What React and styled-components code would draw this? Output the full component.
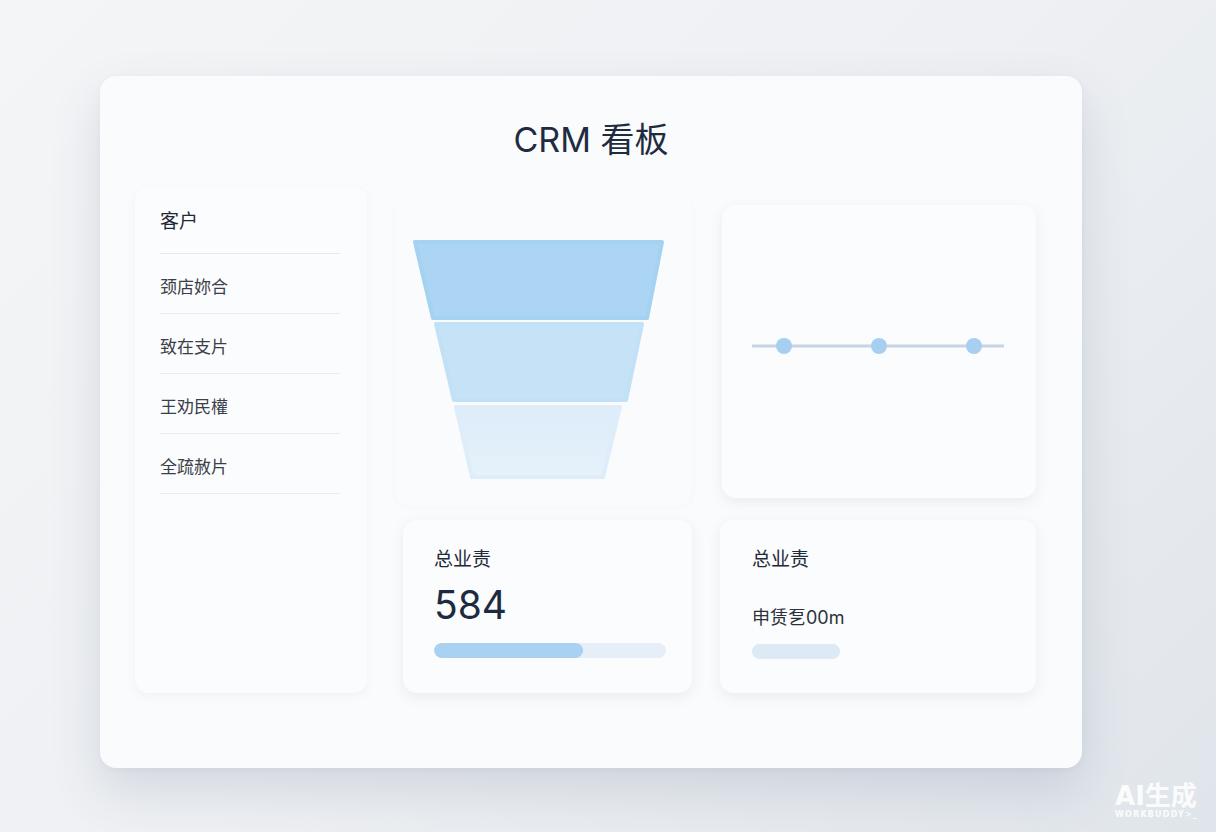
import React from 'react'
import styled, { createGlobalStyle } from 'styled-components'

// customer list + funnel stages
const CUSTOMERS = ['颈店妳合', '致在支片', '王劝民權', '全疏赦片']

const STAGES = [
    { pts: '2,2 249,2 234,78 20,78', fill: '#abd5f3', edge: '#a6d2f2' },
    { pts: '23,84 229,84 213,160 41,160', fill: '#c6e2f6', edge: '#c2e0f6' },
    { pts: '43,167 207,167 190,237 59,237', fill: '#e0eef9', edge: '#deedf9' },
]

const GlobalStyle = createGlobalStyle`
    body {
        margin: 0;
        font-family: Inter, "Noto Sans CJK SC", "Noto Sans", sans-serif;
    }
`

const Page = styled.div`
    position: relative;
    width: 1216px;
    height: 832px;
    box-sizing: border-box;
    padding: 76px 0 0 100px;
    background: linear-gradient(135deg, #f4f5f7 0%, #eef0f3 50%, #e0e5eb 100%);
    overflow: hidden;
`

const Board = styled.div`
    width: 982px;
    height: 692px;
    box-sizing: border-box;
    padding: 44px 0 0 35px;
    border-radius: 16px;
    background: #fafbfc;
    box-shadow: 0 22px 50px rgba(70, 90, 120, 0.16), 0 2px 6px rgba(70, 90, 120, 0.05);
`

const Title = styled.h1`
    margin: 0 35px 0 0;
    font-size: 34px;
    line-height: 40px;
    font-weight: 400;
    text-align: center;
    color: #1f2c40;
`

const Grid = styled.div`
    margin-top: 27px;
    display: grid;
    grid-template-columns: 232px 297px 316px;
    grid-template-rows: 318px 173px;
    column-gap: 28px;
    row-gap: 15px;
`

const Card = styled.div`
    box-sizing: border-box;
    border-radius: 14px;
    background: #fbfcfd;
    box-shadow: 0 4px 14px rgba(60, 85, 120, 0.09);
`

const ListCard = styled(Card)`
    grid-row: 1 / 3;
    padding: 0 27px 0 25px;
    box-shadow: 0 3px 10px rgba(60, 85, 120, 0.05);
`

const ListHead = styled.div`
    padding: 22px 0 18px;
    font-size: 19px;
    line-height: 26px;
    color: #1f2a38;
    border-bottom: 1px solid #e5e9ef;
`

const ListRow = styled.div`
    box-sizing: border-box;
    height: 60px;
    padding-top: 3px;
    display: flex;
    align-items: center;
    font-size: 17px;
    color: #3a4049;
    border-bottom: 1px solid #e8ebf0;
`

const FunnelCard = styled(Card)`
    margin-top: 8px;
    padding: 45px 0 0 18px;
    background: #fafbfc;
    box-shadow: 0 2px 8px rgba(60, 85, 120, 0.025);
`

const LineCard = styled(Card)`
    margin: 18px 0 7px 2px;
    display: flex;
    align-items: center;
    justify-content: center;
    padding: 0 2px 12px 0;
`

const StatCard = styled(Card)`
    margin-left: ${(p) => p.shift || 0}px;
    padding: 28px 28px 0 ${(p) => p.inset}px;
`

const StatLabel = styled.div`
    font-size: 19px;
    line-height: 24px;
    color: #1f2a38;
`

const StatValue = styled.div`
    margin-top: 11px;
    font-size: 39px;
    line-height: 44px;
    font-weight: 400;
    color: #1d2b42;
`

const StatNote = styled.div`
    margin-top: 34px;
    font-size: 18px;
    line-height: 24px;
    color: #2b323c;
`

const Track = styled.div`
    margin-top: ${(p) => p.gap}px;
    width: ${(p) => p.w}px;
    height: 15px;
    border-radius: 8px;
    background: ${(p) => p.bg};
    overflow: hidden;
`

const Fill = styled.div`
    height: 100%;
    border-radius: 8px;
    background: #a9d1f1;
`

const Watermark = styled.div`
    position: absolute;
    right: 18px;
    bottom: 12px;
    display: flex;
    flex-direction: column;
    align-items: flex-start;
    color: rgba(255, 255, 255, 0.9);
    font-family: "DejaVu Sans", "Noto Sans CJK SC", sans-serif;
    font-weight: 700;
`

const MarkBig = styled.span`
    font-size: 26px;
    line-height: 28px;
`

const MarkSmall = styled.span`
    font-size: 8px;
    line-height: 10px;
    letter-spacing: 1.2px;
`

const Funnel = () => (
    <svg width="252" height="240" viewBox="0 0 252 240">
        <defs>
            <linearGradient id="fadeLow" x1="0" y1="0" x2="0" y2="1">
                <stop offset="0" stopColor="#dcecf9" />
                <stop offset="1" stopColor="#e6f1fa" />
            </linearGradient>
        </defs>
        {STAGES.map((s, i) => (
            <polygon key={i} points={s.pts}
                fill={i === 2 ? 'url(#fadeLow)' : s.fill}
                stroke={s.edge} strokeWidth="4" strokeLinejoin="round" />
        ))}
    </svg>
)

const Timeline = () => (
    <svg width="252" height="20" viewBox="0 0 252 20">
        <line x1="1" y1="10" x2="251" y2="10" stroke="#c8d4e2" strokeWidth="3" strokeLinecap="round" />
        {[32, 127, 222].map((x) => (
            <circle key={x} cx={x} cy="10" r="8" fill="#a6cff0" />
        ))}
    </svg>
)

export default function App() {
    return (
        <Page>
            <GlobalStyle />
            <Board>
                <Title>CRM 看板</Title>
                <Grid>
                    <ListCard>
                        <ListHead>客户</ListHead>
                        {CUSTOMERS.map((name) => <ListRow key={name}>{name}</ListRow>)}
                    </ListCard>
                    <FunnelCard>
                        <Funnel />
                    </FunnelCard>
                    <LineCard>
                        <Timeline />
                    </LineCard>
                    <StatCard shift={8} inset={31}>
                        <StatLabel>总业责</StatLabel>
                        <StatValue>584</StatValue>
                        <Track gap={16} w={232} bg="#e6eef7">
                            <Fill style={{ width: `${(149 / 232) * 100}%` }} />
                        </Track>
                    </StatCard>
                    <StatCard inset={32}>
                        <StatLabel>总业责</StatLabel>
                        <StatNote>申赁乭00m</StatNote>
                        <Track gap={14} w={88} bg="#dde9f5" />
                    </StatCard>
                </Grid>
            </Board>
            <Watermark>
                <MarkBig>AI生成</MarkBig>
                <MarkSmall>WORKBUDDY&gt;_</MarkSmall>
            </Watermark>
        </Page>
    )
}
